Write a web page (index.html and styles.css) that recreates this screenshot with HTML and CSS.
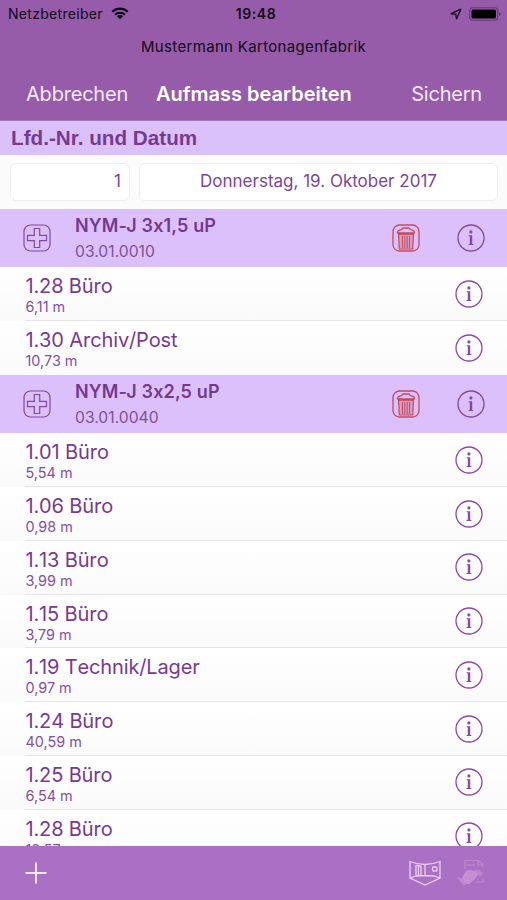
FILE: index.html
```html
<!DOCTYPE html>
<html lang="de">
<head>
<meta charset="utf-8">
<title>Aufmass bearbeiten</title>
<link rel="stylesheet" href="styles.css">
</head>
<body>
<svg class="defs" width="0" height="0" aria-hidden="true">
  <symbol id="info" viewBox="0 0 28 28">
    <circle cx="14" cy="14" r="13" fill="none" stroke="currentColor" stroke-width="1.3"/>
    <circle cx="13.900" cy="7.900" r="1.600" fill="currentColor"/>
    <path d="M11.600 11.300h3.600v8.400l1.200.5v.7h-4.900v-.7l1.300-.5v-7.200l-1.200-.5z" fill="currentColor"/>
  </symbol>
  <symbol id="plus-box" viewBox="0 0 28 28">
    <rect x="1" y="1" width="26" height="26" rx="6.500" fill="none" stroke="currentColor" stroke-width="1.200"/>
    <path d="M11.300 4.500h5.400v6.800h6.800v5.400h-6.800v6.800h-5.400v-6.800H4.500v-5.400h6.800z" fill="none" stroke="currentColor" stroke-width="1.200"/>
  </symbol>
  <symbol id="trash" viewBox="0 0 28 28">
    <rect x="1" y="1" width="26" height="26" rx="6.500" fill="none" stroke="currentColor" stroke-width="1.300"/>
    <path d="M5.500 8.800q.2-2.500 3-2.900 1.800-.2 2.500-1.900h6q.7 1.700 2.500 1.900 2.800.4 3 2.900z" fill="none" stroke="currentColor" stroke-width="1.300"/>
    <path d="M6.500 9.500h15l-.8 15.500H7.300z" fill="currentColor" fill-opacity=".3" stroke="currentColor" stroke-width="1.200"/>
    <path d="M6.500 10.300h15M10.400 12l.2 12M12.800 12v12M15.200 12v12M17.600 12l-.2 12" fill="none" stroke="currentColor" stroke-width="1"/>
  </symbol>
</svg>
<div class="screen">
  <header class="top">
    <div class="status">
      <div class="carrier"><span class="t-carrier">Netzbetreiber</span>
        <svg width="18" height="13" viewBox="0 0 18 13"><path d="M1.300 4.800a11 11 0 0 1 15.400 0M4 7.700a7.200 7.200 0 0 1 10 0" fill="none" stroke="#0b0410" stroke-width="2.100"/><path d="M9 12.300 5.900 9.300a4.400 4.400 0 0 1 6.200 0z" fill="#0b0410"/></svg>
      </div>
      <div class="clock">19:48</div>
      <div class="power">
        <svg width="12" height="12" viewBox="0 0 12 12"><path d="M10.800 1.200 1.200 5.700l4.600.6.800 4.500z" fill="none" stroke="#1c0a26" stroke-width="1.400" stroke-linejoin="round"/></svg>
        <svg width="32" height="14" viewBox="0 0 32 14"><rect x=".7" y=".7" width="28" height="12.600" rx="3" fill="none" stroke="#65387a" stroke-width="1.100"/><rect x="2.500" y="2.500" width="24.400" height="9" rx="1.500" fill="#000"/><path d="M30 4.800q1.500.6 1.500 2.200T30 9.200z" fill="#65387a"/></svg>
      </div>
    </div>
    <div class="company"><span>Mustermann Kartonagenfabrik</span></div>
    <nav class="nav"><span class="cancel">Abbrechen</span><h1>Aufmass bearbeiten</h1><span class="save">Sichern</span></nav>
  </header>
  <h2 class="section">Lfd.-Nr. und Datum</h2>
  <div class="fields"><div class="field number">1</div><div class="field date"><span>Donnerstag, 19. Oktober 2017</span></div></div>
  <main class="list">
    <div class="group"><svg class="icon"><use href="#plus-box"/></svg><div class="label"><b>NYM-J 3x1,5 uP</b><small>03.01.0010</small></div><svg class="icon trash"><use href="#trash"/></svg><svg class="icon"><use href="#info"/></svg></div>
    <div class="row"><div class="cell"><div><p>1.28 Büro</p><small>6,11 m</small></div><svg class="icon"><use href="#info"/></svg></div></div>
    <div class="row last"><div class="cell"><div><p>1.30 Archiv/Post</p><small>10,73 m</small></div><svg class="icon"><use href="#info"/></svg></div></div>
    <div class="group"><svg class="icon"><use href="#plus-box"/></svg><div class="label"><b>NYM-J 3x2,5 uP</b><small>03.01.0040</small></div><svg class="icon trash"><use href="#trash"/></svg><svg class="icon"><use href="#info"/></svg></div>
    <div class="row"><div class="cell"><div><p>1.01 Büro</p><small>5,54 m</small></div><svg class="icon"><use href="#info"/></svg></div></div>
    <div class="row"><div class="cell"><div><p>1.06 Büro</p><small>0,98 m</small></div><svg class="icon"><use href="#info"/></svg></div></div>
    <div class="row"><div class="cell"><div><p>1.13 Büro</p><small>3,99 m</small></div><svg class="icon"><use href="#info"/></svg></div></div>
    <div class="row"><div class="cell"><div><p>1.15 Büro</p><small>3,79 m</small></div><svg class="icon"><use href="#info"/></svg></div></div>
    <div class="row"><div class="cell"><div><p>1.19 Technik/Lager</p><small>0,97 m</small></div><svg class="icon"><use href="#info"/></svg></div></div>
    <div class="row"><div class="cell"><div><p>1.24 Büro</p><small>40,59 m</small></div><svg class="icon"><use href="#info"/></svg></div></div>
    <div class="row"><div class="cell"><div><p>1.25 Büro</p><small>6,54 m</small></div><svg class="icon"><use href="#info"/></svg></div></div>
    <div class="row"><div class="cell"><div><p>1.28 Büro</p><small>18,57 m</small></div><svg class="icon"><use href="#info"/></svg></div></div>
  </main>
  <footer class="toolbar">
    <svg width="22" height="22" viewBox="0 0 22 22"><path d="M11 .5v21M.5 11h21" stroke="#fbeaff" stroke-width="2"/></svg>
    <div class="tools">
      <svg width="32" height="26" viewBox="0 0 32 26" fill="none" stroke="#f0cdf8" stroke-width="1.300"><path d="M1 1.500q7.500 3 15 3t15-3v16.500l-15 7L1 18zM16 4.500v12M1 18l6-2q9-1 18 0l6 2"/><path d="M7 15.500V5.500q2.500-.5 5 1v9M9.500 6v9.500"/><rect x="23.500" y="7" width="4.500" height="4" rx="1"/></svg>
      <svg width="29" height="28" viewBox="0 0 29 28"><path d="M9 10V1.500h13.500l4.500 4V8M22 2v4h5M11 6h8M20 23h7v-4" fill="none" stroke="#bf89ce" stroke-width="1.200"/><path d="M8 15q2-4 6-4l3 1 3-1 4 4-2 1-4 5-5 4H8l-3-4z" fill="#c490d3"/><path d="m1 19 2-1 7 6-2 3zM22 10l5 4-3 4-4-5z" fill="#bd86ce"/></svg>
    </div>
  </footer>
</div>
</body>
</html>
```
FILE: styles.css
```css
* { box-sizing: border-box; margin: 0; }
body { font-family: Inter, "Liberation Sans", sans-serif; font-feature-settings: "calt" 0; color: #773a91; }
.defs { display: block; height: 0; }
.screen { width: 507px; height: 900px; display: flex; flex-direction: column; overflow: hidden; background: #fff; }
.top { height: 121px; flex: none; background: #965ca9; color: #12061a; border-bottom: 1px solid #a87abd; }
.status { height: 27px; display: grid; grid-template-columns: 1fr auto 1fr; align-items: center; padding: 0 6px 0 8px; }
.carrier { display: flex; align-items: center; gap: 8px; font-size: 14px; letter-spacing: .3px; }
.clock { font-size: 14px; font-weight: 600; letter-spacing: .6px; padding-left: 3px; }
.power { display: flex; justify-content: flex-end; align-items: center; gap: 7px; }
.company { height: 40px; line-height: 40px; text-align: center; font-size: 15px; letter-spacing: .33px; }
.nav { height: 53px; display: grid; grid-template-columns: 130px 1fr 96px; align-items: center; padding: 0 25px 0 26px; color: #f8e8ff; font-size: 20px; letter-spacing: -.2px; }
.nav h1 { font-size: 20px; font-weight: 600; color: #fff; text-align: left; white-space: nowrap; letter-spacing: 0; }
.save { text-align: right; }
.section { height: 34px; flex: none; padding-left: 11px; background: #dbc1fb; font: bold 20.700px/34px "Liberation Sans", sans-serif; }
.fields { height: 54px; flex: none; display: flex; gap: 9px; padding: 8px 9px 8px 10px; background: #fcfbfc; }
.field { height: 38px; line-height: 35px; border: 1px solid #efedf0; border-radius: 6px; background: #fff; font-size: 17px; color: #7c4695; }
.number { width: 120px; text-align: right; padding-right: 8px; }
.date { flex: 1; text-align: center; }
.list { flex: 1; min-height: 0; overflow: hidden; }
.group { height: 58.450px; display: flex; align-items: center; padding: 0 22px 0 23px; background: #dbc0fc; color: #74398f; }
.label { flex: 1; padding: 3px 0 0 24px; }
.label b { display: block; font-size: 18px; font-weight: 600; line-height: 24px; letter-spacing: .15px; }
.label small { display: block; font-size: 15.700px; line-height: 27px; color: #805199; }
.icon { display: block; flex: none; width: 28px; height: 28px; color: #8149a0; }
.trash { color: #c44c5c; margin-right: 37px; }
.row { height: 53.750px; padding-left: 25px; background: linear-gradient(#fff, #fafafa); }
.row .icon { color: #8d48a8; }
.cell { height: 100%; display: flex; justify-content: space-between; align-items: center; padding-right: 24px; border-bottom: 1px solid #e6e4e7; }
.last .cell { border-bottom-color: transparent; }
.cell > div { padding: 3px 0 0 .5px; }
.row p { font-size: 20px; line-height: 24px; font-kerning: none; letter-spacing: -.15px; }
.row small { display: block; font-size: 14.400px; line-height: 18px; color: #84509b; }
.toolbar { height: 54px; flex: none; display: flex; justify-content: space-between; align-items: center; padding: 0 22px 0 25px; background: #aa70c4; }
.tools { display: flex; align-items: center; gap: 15px; }
```
